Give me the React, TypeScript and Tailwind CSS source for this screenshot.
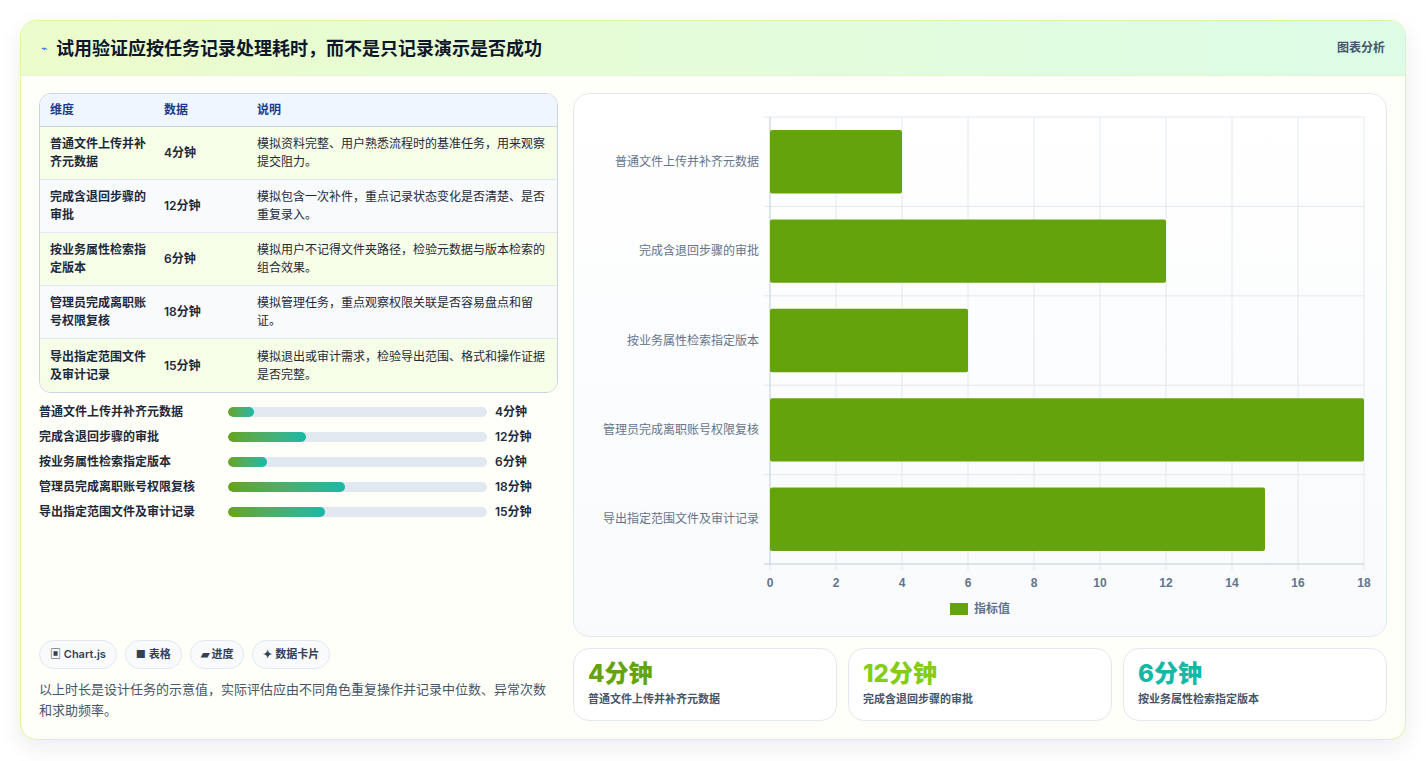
import React from "react";

const rows = [
  ["普通文件上传并补齐元数据", "4分钟", "模拟资料完整、用户熟悉流程时的基准任务，用来观察提交阻力。", 4],
  ["完成含退回步骤的审批", "12分钟", "模拟包含一次补件，重点记录状态变化是否清楚、是否重复录入。", 12],
  ["按业务属性检索指定版本", "6分钟", "模拟用户不记得文件夹路径，检验元数据与版本检索的组合效果。", 6],
  ["管理员完成离职账号权限复核", "18分钟", "模拟管理任务，重点观察权限关联是否容易盘点和留证。", 18],
  ["导出指定范围文件及审计记录", "15分钟", "模拟退出或审计需求，检验导出范围、格式和操作证据是否完整。", 15],
] as const;

const tableNames = ["普通文件上传并补\n齐元数据", "完成含退回步骤的\n审批", "按业务属性检索指\n定版本", "管理员完成离职账\n号权限复核", "导出指定范围文件\n及审计记录"];

function Chart() {
  const L = 196, T = 23, R = 790, B = 470;
  const w = R - L, band = (B - T) / 5;
  return (
    <svg width="812" height="542" className="block">
      {Array.from({ length: 10 }).map((_, i) => {
        const x = L + (w * i) / 9;
        return <line key={i} x1={x} y1={T} x2={x} y2={B + 6} stroke="#e2e8f0" />;
      })}
      {Array.from({ length: 6 }).map((_, i) => {
        const y = T + band * i;
        return <line key={i} x1={L - 6} y1={y} x2={R} y2={y} stroke="#e2e8f0" />;
      })}
      <line x1={L} y1={T} x2={L} y2={B} stroke="#cbd5e1" />
      <line x1={L - 6} y1={B} x2={R} y2={B} stroke="#cbd5e1" />
      {rows.map((r, i) => {
        const y = T + band * i + 13;
        return (
          <g key={i}>
            <rect x={L} y={y} width={(w * (r[3] as number)) / 18} height={band - 26} fill="#65a30d" rx="2" />
            <text x={L - 11} y={T + band * i + band / 2 + 4} textAnchor="end" fontSize="12" fill="#64748b" fontFamily="'Noto Sans CJK SC', sans-serif">{r[0]}</text>
          </g>
        );
      })}
      {Array.from({ length: 10 }).map((_, i) => (
        <text key={i} x={L + (w * i) / 9} y={B + 23} textAnchor="middle" fontSize="12" fontWeight="600" fill="#64748b" fontFamily="'Liberation Sans', sans-serif">{i * 2}</text>
      ))}
      <rect x={376} y={509} width={18} height={12} fill="#65a30d" />
      <text x={400} y={519} fontSize="12" fill="#64748b" fontWeight="600" fontFamily="'Noto Sans CJK SC', sans-serif">指标值</text>
    </svg>
  );
}

export default function App() {
  return (
    <div className="min-h-[761px] bg-white pt-5 px-5 pb-5" style={{ fontFamily: "Inter, 'Noto Sans CJK SC', sans-serif" }}>
      <div className="rounded-2xl border border-[#d9f99d] bg-[#fefff8] shadow-[0_8px_24px_rgba(15,23,42,0.08)] overflow-hidden">
        <div className="h-[55px] flex items-center justify-between px-5 bg-gradient-to-r from-[#ecfccb] to-[#dcfce7] border-b border-[#e2f5cf]">
          <div className="flex items-center gap-2">
            <span className="text-[11px] text-[#2563eb]">⌁</span>
            <h1 className="text-[18px] font-bold text-[#0f172a]">试用验证应按任务记录处理耗时，而不是只记录演示是否成功</h1>
          </div>
          <span className="text-[12px] font-semibold text-[#475569]">图表分析</span>
        </div>
        <div className="flex gap-[15px] px-[18px] pt-[17px] pb-[18px]">
          <div className="w-[520px] flex flex-col">
            <div className="rounded-xl border border-[#cbd5e1] overflow-hidden">
              <div className="flex h-[33px] items-center bg-[#eff6ff] border-b border-[#cbd5e1] text-[12px] font-semibold text-[#1e3a8a]">
                <div className="w-[124px] pl-[10px]">维度</div>
                <div className="w-[93px]">数据</div>
                <div>说明</div>
              </div>
              {rows.map((r, i) => (
                <div key={i} className={`flex h-[53px] items-center text-[12px] leading-[18px] text-[#1e293b] ${i < 4 ? "border-b border-[#e2e8f0]" : ""} ${i % 2 ? "bg-[#f8fafc]" : "bg-[#f7fee7]"}`}>
                  <div className="w-[124px] pl-[10px] pr-2 font-semibold whitespace-pre-line">{tableNames[i]}</div>
                  <div className="w-[93px] font-semibold">{r[1]}</div>
                  <div className="flex-1 pr-3">{r[2]}</div>
                </div>
              ))}
            </div>
            <div className="mt-[13px] flex flex-col gap-[13px]">
              {rows.map((r, i) => (
                <div key={i} className="flex items-center h-[12px] text-[12px] font-semibold text-[#1e293b]">
                  <div className="w-[189px]">{r[0]}</div>
                  <div className="w-[259px] h-[10px] rounded-full bg-[#e2e8f0] overflow-hidden">
                    <div className="h-full rounded-full bg-gradient-to-r from-[#65a30d] to-[#14b8a6]" style={{ width: `${((r[3] as number) / 40) * 100}%` }} />
                  </div>
                  <div className="ml-2">{r[1]}</div>
                </div>
              ))}
            </div>
            <div className="mt-auto flex gap-2 text-[11px] font-semibold text-[#334155]">
              {["▣ Chart.js", "■ 表格", "▰ 进度", "✦ 数据卡片"].map((c) => (
                <span key={c} className="h-[29px] px-[10px] flex items-center rounded-full border border-[#e2e8f0] bg-[#f8fafc]">{c}</span>
              ))}
            </div>
            <p className="mt-[10px] text-[13px] leading-[21px] text-[#475569]">以上时长是设计任务的示意值，实际评估应由不同角色重复操作并记录中位数、异常次数和求助频率。</p>
          </div>
          <div className="flex-1 flex flex-col gap-[11px]">
            <div className="h-[544px] rounded-2xl border border-[#e2e8f0] bg-gradient-to-b from-white to-[#f8fafc]">
              <Chart />
            </div>
            <div className="flex gap-[11px]">
              {[["4分钟", "普通文件上传并补齐元数据", "text-[#65a30d]"], ["12分钟", "完成含退回步骤的审批", "text-[#84cc16]"], ["6分钟", "按业务属性检索指定版本", "text-[#14b8a6]"]].map(([v, l, c]) => (
                <div key={v} className="flex-1 h-[73px] rounded-2xl border border-[#e2e8f0] bg-white px-[14px] pt-[10px]">
                  <div className={`text-[24px] font-extrabold leading-[30px] ${c}`}>{v}</div>
                  <div className="text-[11px] font-semibold text-[#475569] mt-[2px]">{l}</div>
                </div>
              ))}
            </div>
          </div>
        </div>
      </div>
    </div>
  );
}
